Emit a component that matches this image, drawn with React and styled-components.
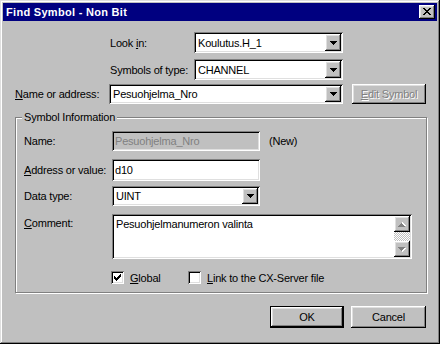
import React from "react";
import styled, { createGlobalStyle } from "styled-components";

const GlobalStyle = createGlobalStyle`
  body {
    margin: 0;
    background: #c0c0c0;
    font-family: "Liberation Sans", Arial, sans-serif;
    font-size: 11px;
    color: #000;
  }
`;

const raised = `box-shadow: inset -1px -1px #000, inset 1px 1px #fff, inset -2px -2px #808080, inset 2px 2px #dfdfdf;`;
const sunken = `box-shadow: inset 1px 1px #808080, inset -1px -1px #fff, inset 2px 2px #000, inset -2px -2px #dfdfdf;`;

const Window = styled.div`
  width: 440px;
  height: 344px;
  box-sizing: border-box;
  padding: 3px;
  background: #c0c0c0;
  box-shadow: inset -1px -1px #000, inset 1px 1px #dfdfdf, inset -2px -2px #808080, inset 2px 2px #fff;
  display: flex;
  flex-direction: column;
`;

const TitleBar = styled.div`
  height: 18px;
  background: #000080;
  color: #fff;
  display: flex;
  align-items: center;
  justify-content: space-between;
  padding: 0 2px 0 3px;
  font-weight: bold;
  letter-spacing: 0.3px;
`;

const CloseButton = styled.div`
  width: 16px;
  height: 14px;
  background: #c0c0c0;
  ${raised}
  display: flex;
  align-items: center;
  justify-content: center;
  padding-bottom: 1px;
  box-sizing: border-box;
`;

const Body = styled.div`
  display: flex;
  flex-direction: column;
  padding: 0 11px 0 12px;
  letter-spacing: -0.2px;
`;

const Row = styled.div`
  display: flex;
  align-items: ${p => p.$top ? "flex-start" : "center"};
  margin-top: ${p => p.$mt || 0}px;
  padding-left: ${p => p.$indent || 0}px;
`;

const Label = styled.div`
  width: ${p => p.$w}px;
  flex: none;
  white-space: nowrap;
  padding-top: ${p => p.$pt || 0}px;
`;

const Key = styled.span`
  text-decoration: underline;
`;

const Combo = styled.div`
  display: flex;
  box-sizing: border-box;
  width: ${p => p.$w}px;
  height: ${p => p.$h || 21}px;
  padding: 2px;
  background: #fff;
  ${sunken}
`;

const Value = styled.div`
  flex: 1;
  display: flex;
  align-items: center;
  padding-left: 2px;
  white-space: nowrap;
`;

const DropButton = styled.div`
  width: 16px;
  background: #c0c0c0;
  ${raised}
  display: flex;
  align-items: center;
  justify-content: center;
`;

const Field = styled.div`
  box-sizing: border-box;
  width: ${p => p.$w}px;
  height: ${p => p.$h}px;
  padding: 2px 2px 2px 3px;
  display: flex;
  align-items: center;
  background: ${p => p.$disabled ? "#c0c0c0" : "#fff"};
  color: ${p => p.$disabled ? "#808080" : "#000"};
  ${sunken}
`;

const Button = styled.div`
  box-sizing: border-box;
  width: ${p => p.$w}px;
  height: ${p => p.$h}px;
  margin-left: ${p => p.$ml || 0}px;
  display: flex;
  align-items: center;
  justify-content: center;
  background: #c0c0c0;
  color: ${p => p.$disabled ? "#808080" : "#000"};
  text-shadow: ${p => p.$disabled ? "1px 1px 0 #fff" : "none"};
  ${p => p.$default
    ? "border: 1px solid #000; box-shadow: inset -1px -1px #000, inset 1px 1px #fff, inset -2px -2px #808080, inset 2px 2px #dfdfdf;"
    : raised}
`;

const GroupBox = styled.div`
  position: relative;
  box-sizing: border-box;
  width: 412px;
  height: 176px;
  margin-top: 13px;
  padding: 13px 0 0 8px;
  border: 1px solid #808080;
  box-shadow: 1px 1px 0 #fff, inset 1px 1px 0 #fff;
`;

const Legend = styled.div`
  position: absolute;
  top: -7px;
  left: 6px;
  padding: 0 2px;
  background: #c0c0c0;
  line-height: 13px;
`;

const Note = styled.div`
  margin-left: 9px;
`;

const TextBox = styled.div`
  box-sizing: border-box;
  width: 300px;
  height: 45px;
  padding: 2px;
  display: flex;
  background: #fff;
  ${sunken}
`;

const TextContent = styled.div`
  flex: 1;
  padding: 2px 2px 0 2px;
`;

const ScrollBar = styled.div`
  width: 16px;
  display: flex;
  flex-direction: column;
`;

const ScrollButton = styled.div`
  height: 16px;
  background: #c0c0c0;
  ${raised}
  display: flex;
  align-items: center;
  justify-content: center;
`;

const ScrollTrack = styled.div`
  flex: 1;
  background: repeating-conic-gradient(#c0c0c0 0 25%, #fff 0 50%) 0 0 / 2px 2px;
`;

const CheckItem = styled.div`
  display: flex;
  align-items: center;
  width: ${p => p.$w ? `${p.$w}px` : "auto"};
`;

const Check = styled.div`
  width: 13px;
  height: 13px;
  box-sizing: border-box;
  background: #fff;
  ${sunken}
  display: flex;
  align-items: center;
  justify-content: center;
`;

const CheckLabel = styled.div`
  margin-left: 6px;
`;

const ButtonRow = styled.div`
  display: flex;
  justify-content: flex-end;
  margin-top: 13px;
`;

const CloseIcon = () => (
  <svg width="8" height="7" viewBox="0 0 8 7">
    <path
      fill="#000"
      d="M0 0h2v1H0zM6 0h2v1H6zM1 1h2v1H1zM5 1h2v1H5zM2 2h4v1H2zM3 3h2v1H3zM2 4h4v1H2zM1 5h2v1H1zM5 5h2v1H5zM0 6h2v1H0zM6 6h2v1H6z"
    />
  </svg>
);

const ArrowDown = () => (
  <svg width="7" height="4" viewBox="0 0 7 4">
    <path fill="#000" d="M0 0h7v1H0zM1 1h5v1H1zM2 2h3v1H2zM3 3h1v1H3z" />
  </svg>
);

const DisabledArrow = ({ up }) => (
  <svg width="8" height="5" viewBox="0 0 8 5" style={{ transform: up ? "scaleY(-1)" : "none" }}>
    <path fill="#fff" d="M1 1h7v1H1zM2 2h5v1H2zM3 3h3v1H3zM4 4h1v1H4z" />
    <path fill="#808080" d="M0 0h7v1H0zM1 1h5v1H1zM2 2h3v1H2zM3 3h1v1H3z" />
  </svg>
);

const CheckMark = () => (
  <svg width="7" height="7" viewBox="0 0 7 7">
    <path
      fill="#000"
      d="M6 0h1v1H6zM5 1h2v1H5zM0 2h1v1H0zM4 2h3v1H4zM0 3h2v1H0zM3 3h3v1H3zM0 4h5v1H0zM1 5h3v1H1zM2 6h1v1H2z"
    />
  </svg>
);

const ComboBox = ({ w, h, children }) => (
  <Combo $w={w} $h={h}>
    <Value>{children}</Value>
    <DropButton>
      <ArrowDown />
    </DropButton>
  </Combo>
);

export default function App() {
  return (
    <>
      <GlobalStyle />
      <Window>
        <TitleBar>
          <span>Find Symbol - Non Bit</span>
          <CloseButton>
            <CloseIcon />
          </CloseButton>
        </TitleBar>
        <Body>
          <Row $mt={11} $indent={95}>
            <Label $w={84}>Look <Key>i</Key>n:</Label>
            <ComboBox w={149}>Koulutus.H_1</ComboBox>
          </Row>
          <Row $mt={6} $indent={95}>
            <Label $w={84}>Symbols of type:</Label>
            <ComboBox w={149}>CHANNEL</ComboBox>
          </Row>
          <Row $mt={4}>
            <Label $w={94}><Key>N</Key>ame or address:</Label>
            <ComboBox w={234} h={20}>Pesuohjelma_Nro</ComboBox>
            <Button $w={74} $h={20} $ml={9} $disabled><Key>E</Key>dit Symbol</Button>
          </Row>

          <GroupBox>
            <Legend>Symbol Information</Legend>
            <Row>
              <Label $w={88}>Name:</Label>
              <Field $w={148} $h={20} $disabled>Pesuohjelma_Nro</Field>
              <Note>(New)</Note>
            </Row>
            <Row $mt={8}>
              <Label $w={88}><Key>A</Key>ddress or value:</Label>
              <Field $w={148} $h={22}>d10</Field>
            </Row>
            <Row $mt={5}>
              <Label $w={88}>Data type:</Label>
              <ComboBox w={148} h={20}>UINT</ComboBox>
            </Row>
            <Row $mt={8} $top>
              <Label $w={88} $pt={3}><Key>C</Key>omment:</Label>
              <TextBox>
                <TextContent>Pesuohjelmanumeron valinta</TextContent>
                <ScrollBar>
                  <ScrollButton><DisabledArrow up /></ScrollButton>
                  <ScrollTrack />
                  <ScrollButton><DisabledArrow /></ScrollButton>
                </ScrollBar>
              </TextBox>
            </Row>
            <Row $mt={12} $indent={87}>
              <CheckItem $w={77}>
                <Check><CheckMark /></Check>
                <CheckLabel><Key>G</Key>lobal</CheckLabel>
              </CheckItem>
              <CheckItem>
                <Check />
                <CheckLabel><Key>L</Key>ink to the CX-Server file</CheckLabel>
              </CheckItem>
            </Row>
          </GroupBox>

          <ButtonRow>
            <Button $w={74} $h={22} $default>OK</Button>
            <Button $w={75} $h={22} $ml={7}>Cancel</Button>
          </ButtonRow>
        </Body>
      </Window>
    </>
  );
}
